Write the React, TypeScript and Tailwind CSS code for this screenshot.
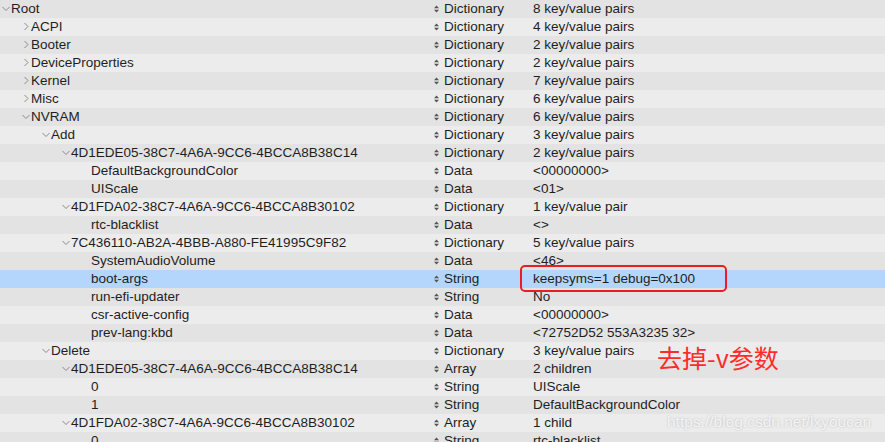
import React from "react";

type Row = {
  key: string;
  level: number;
  open?: boolean;
  type: string;
  value: string;
  selected?: boolean;
};

const rows: Row[] = [
  { key: "Root", level: 0, open: true, type: "Dictionary", value: "8 key/value pairs" },
  { key: "ACPI", level: 1, open: false, type: "Dictionary", value: "4 key/value pairs" },
  { key: "Booter", level: 1, open: false, type: "Dictionary", value: "2 key/value pairs" },
  { key: "DeviceProperties", level: 1, open: false, type: "Dictionary", value: "2 key/value pairs" },
  { key: "Kernel", level: 1, open: false, type: "Dictionary", value: "7 key/value pairs" },
  { key: "Misc", level: 1, open: false, type: "Dictionary", value: "6 key/value pairs" },
  { key: "NVRAM", level: 1, open: true, type: "Dictionary", value: "6 key/value pairs" },
  { key: "Add", level: 2, open: true, type: "Dictionary", value: "3 key/value pairs" },
  { key: "4D1EDE05-38C7-4A6A-9CC6-4BCCA8B38C14", level: 3, open: true, type: "Dictionary", value: "2 key/value pairs" },
  { key: "DefaultBackgroundColor", level: 4, type: "Data", value: "<00000000>" },
  { key: "UIScale", level: 4, type: "Data", value: "<01>" },
  { key: "4D1FDA02-38C7-4A6A-9CC6-4BCCA8B30102", level: 3, open: true, type: "Dictionary", value: "1 key/value pair" },
  { key: "rtc-blacklist", level: 4, type: "Data", value: "<>" },
  { key: "7C436110-AB2A-4BBB-A880-FE41995C9F82", level: 3, open: true, type: "Dictionary", value: "5 key/value pairs" },
  { key: "SystemAudioVolume", level: 4, type: "Data", value: "<46>" },
  { key: "boot-args", level: 4, type: "String", value: "keepsyms=1 debug=0x100", selected: true },
  { key: "run-efi-updater", level: 4, type: "String", value: "No" },
  { key: "csr-active-config", level: 4, type: "Data", value: "<00000000>" },
  { key: "prev-lang:kbd", level: 4, type: "Data", value: "<72752D52 553A3235 32>" },
  { key: "Delete", level: 2, open: true, type: "Dictionary", value: "3 key/value pairs" },
  { key: "4D1EDE05-38C7-4A6A-9CC6-4BCCA8B38C14", level: 3, open: true, type: "Array", value: "2 children" },
  { key: "0", level: 4, type: "String", value: "UIScale" },
  { key: "1", level: 4, type: "String", value: "DefaultBackgroundColor" },
  { key: "4D1FDA02-38C7-4A6A-9CC6-4BCCA8B30102", level: 3, open: true, type: "Array", value: "1 child" },
  { key: "0", level: 4, type: "String", value: "rtc-blacklist" },
];

const indents = ["pl-[1px]", "pl-[21px]", "pl-[41px]", "pl-[61px]", "pl-[81px]"];

function Chevron({ open }: { open?: boolean }) {
  if (open === undefined) return <span className="w-[10px] shrink-0" />;
  return (
    <svg width="10" height="18" viewBox="0 0 10 18" className="shrink-0">
      {open ? (
        <polyline points="1.5,7 5,10.5 8.5,7" fill="none" stroke="#8a8a8a" strokeWidth="1" />
      ) : (
        <polyline points="3.5,5 7,8.5 3.5,12" fill="none" stroke="#8a8a8a" strokeWidth="1" />
      )}
    </svg>
  );
}

function Stepper() {
  return (
    <svg width="5" height="18" viewBox="0 0 5 18" className="shrink-0">
      <polygon points="2.5,5.5 5,8.3 0,8.3" fill="#555" />
      <polygon points="2.5,12.5 5,9.7 0,9.7" fill="#555" />
    </svg>
  );
}

export default function App() {
  return (
    <div
      className="relative w-[885px] h-[442px] overflow-hidden bg-[#e3e3e3] text-[13.5px] text-[#1e1e1e]"
      style={{ fontFamily: '"Liberation Sans", Arial, sans-serif' }}
    >
      {rows.map((r, i) => (
        <div
          key={i}
          className={`relative flex h-[18px] items-center ${
            r.selected ? "bg-[#b4d6fc]" : i % 2 === 0 ? "bg-[#e3e3e3]" : "bg-[#ececec]"
          }`}
        >
          <div className={`flex w-[434px] shrink-0 items-center ${indents[r.level]}`}>
            <Chevron open={r.open} />
            <span className="whitespace-nowrap leading-[18px]">{r.key}</span>
          </div>
          <div className="flex w-[99px] shrink-0 items-center gap-[5px]">
            <Stepper />
            <span className="leading-[18px]">{r.type}</span>
          </div>
          <div className="whitespace-nowrap leading-[18px]">{r.value}</div>
          {r.selected && (
            <div className="absolute z-10 left-[520px] top-[-5px] h-[27px] w-[207px] rounded-[5px] border-2 border-[#ea1d25]" />
          )}
        </div>
      ))}

      <div
        className="absolute left-[657px] top-[340px] text-[25px] leading-[34px] text-[#ff2b2b]"
        style={{ fontFamily: '"Noto Sans CJK SC", sans-serif' }}
      >
        去掉-v参数
      </div>

      <div className="absolute left-[667px] top-[412px] text-[15.5px] leading-[20px] text-white/80 [text-shadow:0_0_2px_rgba(0,0,0,0.25)]">
        https://blog.csdn.net/lxyoucan
      </div>
    </div>
  );
}
